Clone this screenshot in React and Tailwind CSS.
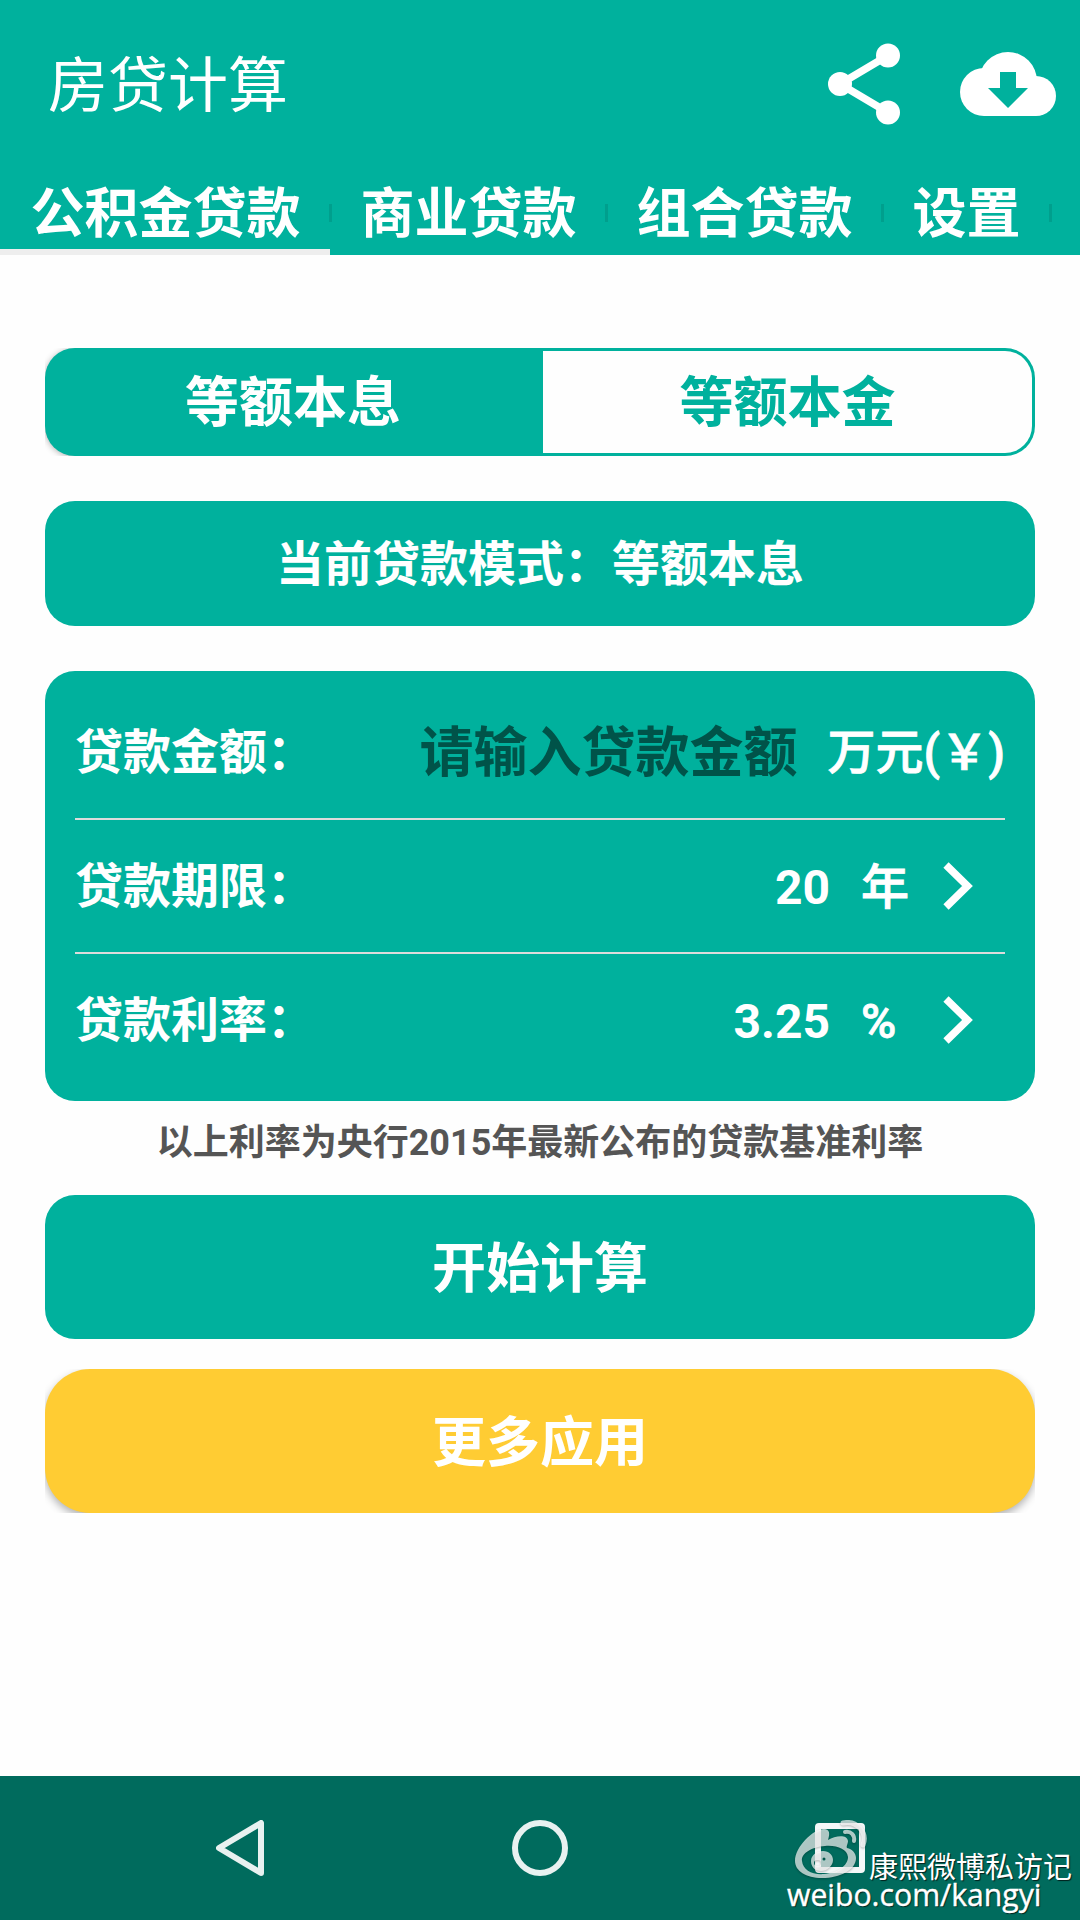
const tabs = ['公积金贷款', '商业贷款', '组合贷款', '设置'];

const ShareIcon = () => (
  <svg className="h-[84px] w-[74px]" viewBox="0 0 74 84" fill="#fff">
    <path d="M60 13.5 L12 42 L60 70.5" fill="none" stroke="#fff" strokeWidth="7.5" />
    <circle cx="60" cy="13.5" r="12" />
    <circle cx="12" cy="42" r="12" />
    <circle cx="60" cy="70.5" r="12" />
  </svg>
);

const CloudIcon = () => (
  <svg className="h-[64px] w-[96px]" viewBox="0 0 96 64" fill="#fff">
    <circle cx="24" cy="40" r="24" />
    <circle cx="48" cy="29" r="29" />
    <circle cx="76" cy="44" r="20" />
    <path d="M24 36 H76 V64 H24 Z" />
    <path d="M40 20 H56 V36 H68 L48 56 L28 36 H40 Z" fill="#00b19d" />
  </svg>
);

const Chevron = () => (
  <svg className="h-12 w-[30px]" viewBox="0 0 30 48">
    <path d="M3 3 L24.5 24 L3 45" fill="none" stroke="#fff" strokeWidth="7.5" />
  </svg>
);

const WeiboLogo = () => (
  <svg
    className="h-[60px] w-[74px] drop-shadow-[0_1px_1px_rgba(0,0,0,0.4)]"
    viewBox="0 0 74 60"
    fill="#fff"
    fillOpacity="0.68"
  >
    <path
      fillRule="evenodd"
      d="M1 41 C1 27 19 9 30 9 C36 9 36 14 34 20 C41 16 53 14 54 21 C54 24 52 26 53 28 C58 29 62 33 62 38 C62 50 46 58 28 58 C12 58 1 51 1 41 Z M8 41 C9 50 18 55 30 54 C43 53 54 46 54 37 C53 29 43 25 31 26 C18 27 7 33 8 41 Z"
    />
    <path
      fillRule="evenodd"
      d="M17 41 C17 35 23 31 29 31 C35 31 39 35 39 40 C39 46 33 51 27 51 C21 51 17 47 17 41 Z M20 43 A3.5 3 0 1 0 27 43 A3.5 3 0 1 0 20 43 Z M28.5 39 A1.5 1.5 0 1 0 31.5 39 A1.5 1.5 0 1 0 28.5 39 Z"
    />
    <path d="M51 12 C57 11 61 15 60 21" fill="none" stroke="#fff" strokeOpacity="0.68" strokeWidth="4" strokeLinecap="round" />
    <path d="M49 3 C62 0 74 12 69 25" fill="none" stroke="#fff" strokeOpacity="0.68" strokeWidth="5" strokeLinecap="round" />
  </svg>
);

const Row = ({ label, children }) => (
  <div className="flex h-[132px] items-center justify-between">
    <span className="pt-[2px]">{label}</span>
    <div className="flex items-center">{children}</div>
  </div>
);

const Picker = ({ value, unit }) => (
  <>
    <span className="pt-[3px]">{value}</span>
    <span className="ml-[31px] min-w-[49px] pt-[3px] font-medium [-webkit-text-stroke:0.8px_#fff]">{unit}</span>
    <span className="mr-8 ml-[33px]">
      <Chevron />
    </span>
  </>
);

const App = () => (
  <div className="relative flex h-[1920px] w-[1080px] flex-col overflow-hidden bg-[#fefefe] font-['Roboto','Noto_Sans_CJK_SC',sans-serif] text-white">
    {/* APP BAR */}
    <header className="h-[255px] bg-[#00b19d]">
      <div className="flex h-[168px] items-center pr-6 pl-12">
        <h1 className="flex-1 pt-[6px] text-[60px] leading-none">房贷计算</h1>
        <ShareIcon />
        <span className="ml-[58px]">
          <CloudIcon />
        </span>
      </div>
      <nav className="flex h-[87px]">
        {tabs.map((tab, i) => (
          <div key={tab} className={`relative pr-[29.5px] pl-[30.5px] ${i === 0 ? 'border-b-6 border-[#eee]' : ''}`}>
            <span className="block pt-5 text-[54px] leading-[54px] font-bold">{tab}</span>
            <span className="absolute top-9 -right-[1.5px] h-[18px] w-[3px] bg-[#009f8d]" />
          </div>
        ))}
      </nav>
    </header>

    <main className="flex flex-1 flex-col px-[45px] pt-[93px] font-bold">
      {/* REPAYMENT TYPE */}
      <div className="flex h-[108px] overflow-hidden text-[54px] leading-none">
        <button className="w-[498px] rounded-l-[30px] bg-[#00b19d] pt-1 pr-[2px] font-bold shadow-[0_1px_6px_rgba(0,0,0,0.3)]">等额本息</button>
        <button className="flex-1 rounded-r-[30px] border-3 border-l-0 border-[#00b19d] bg-[#fefefe] pt-1 font-bold text-[#00b19d]">等额本金</button>
      </div>

      <div className="mt-[45px] flex h-[125px] items-center justify-center rounded-[30px] bg-[#00b19d] pt-[3px] text-[48px] leading-none">
        当前贷款模式：等额本息
      </div>

      {/* LOAN FORM */}
      <section className="mt-[45px] h-[430px] rounded-[30px] bg-[#00b19d] px-[30px] py-[15px] text-[48px] leading-none">
        <Row label="贷款金额：">
          <span className="pt-1 text-[54px] text-[#005349]">请输入贷款金额</span>
          <span className="ml-[30px] pt-[2px] font-medium [-webkit-text-stroke:0.8px_#fff]">万元(￥)</span>
        </Row>
        <div className="h-[2px] bg-[#dcdcdc]" />
        <Row label="贷款期限：">
          <Picker value="20" unit="年" />
        </Row>
        <div className="h-[2px] bg-[#dcdcdc]" />
        <Row label="贷款利率：">
          <Picker value="3.25" unit="%" />
        </Row>
      </section>

      <p className="flex h-[94px] items-center justify-center pb-[10px] text-[36px] leading-none text-[#555]">
        以上利率为央行2015年最新公布的贷款基准利率
      </p>

      <button className="h-36 rounded-[30px] bg-[#00b19d] pt-[6px] text-[54px] leading-none font-bold">开始计算</button>
      <div className="mt-[30px] h-36 overflow-hidden">
        <button className="h-full w-full rounded-[45px] bg-[#fc3] pt-[6px] text-[54px] leading-none font-bold shadow-[0_4px_9px_rgba(0,0,0,0.3)]">
          更多应用
        </button>
      </div>
    </main>

    {/* SYSTEM NAVIGATION */}
    <footer className="grid h-36 grid-cols-[480px_120px_480px] items-center bg-[#006b5d]">
      <svg className="ml-[216px] h-14 w-12" viewBox="0 0 48 56">
        <path d="M45 3 V53 L3 28 Z" fill="none" stroke="#e8f1f0" strokeWidth="6" strokeLinejoin="round" />
      </svg>
      <span className="h-14 w-14 justify-self-center rounded-full border-6 border-[#e8f1f0]" />
      <span className="ml-[215px] h-[50px] w-[50px] rounded-[4px] border-6 border-[#f4f8f8]" />
    </footer>

    {/* WATERMARK */}
    <div className="absolute top-[1820px] left-[794px] [text-shadow:1px_1px_1px_rgba(0,0,0,0.7)]">
      <WeiboLogo />
      <span className="absolute top-[34px] left-[75px] text-[29px] leading-[28px] whitespace-nowrap">康熙微博私访记</span>
      <span className="absolute top-[62px] -left-[7px] font-['Open_Sans',sans-serif] text-[30.2px] leading-[26px] [-webkit-text-stroke:0.4px_#fff]">
        weibo.com/kangyi
      </span>
    </div>
  </div>
);

export default App;
